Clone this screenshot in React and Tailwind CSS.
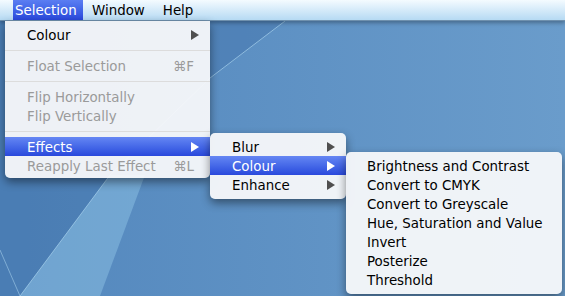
import React from "react";

const font = { fontFamily: '"DejaVu Sans", "Liberation Sans", sans-serif' };

function Arrow({ light }) {
  return (
    <svg width="8" height="10" viewBox="0 0 8 10" className={light ? "fill-white" : "fill-[#4f4f4f]"}>
      <path d="M0 0 L8 5 L0 10 Z" />
    </svg>
  );
}

function Row({ label, arrow, shortcut, disabled, active, pl = "pl-[22px]" }) {
  const color = active ? "text-white" : disabled ? "text-[#9a9a9a]" : "text-black";
  return (
    <div
      className={`h-[19px] flex items-center ${pl} pr-[11px] ${color} ${
        active ? "bg-gradient-to-b from-[#6586f3] to-[#2a48dc]" : ""
      }`}
    >
      <span className="flex-1 whitespace-nowrap leading-[19px] translate-y-[1px]">{label}</span>
      {shortcut && <span className="mr-[5px] leading-[19px] translate-y-[1px]">{shortcut}</span>}
      {arrow && <Arrow light={active} />}
    </div>
  );
}

function Sep() {
  return (
    <div className="h-[12px] flex items-center">
      <div className="h-px w-full bg-[#dcdcdc]" />
    </div>
  );
}

export default function App() {
  return (
    <div
      className="relative w-[565px] h-[296px] overflow-hidden bg-gradient-to-r from-[#5387bd] to-[#6a9ccb] text-[13.4px]"
      style={font}
    >
      {/* desktop light rays */}
      <svg className="absolute inset-0" width="565" height="296" viewBox="0 0 565 296">
        <polygon points="0,21 285,21 210,78 110,175 20,296 0,296" fill="#3a6aa4" opacity="0.35" />
        <polygon points="20,296 110,175 145,175 100,296" fill="#9ad0ee" opacity="0.4" />
        <polyline points="20,296 110,175 210,78 285,21" fill="none" stroke="#b4dcf4" strokeWidth="1" opacity="0.6" />
        <line x1="0" y1="250" x2="20" y2="296" stroke="#b4dcf4" strokeWidth="1" opacity="0.5" />
      </svg>

      {/* menubar */}
      <div className="relative h-[21px] flex items-center pl-[13px] bg-gradient-to-b from-[#f4fbff] to-[#b6daf3] border-b border-[#6f90ad] shadow-[0_2px_4px_rgba(0,0,0,0.3)] text-black leading-[20px]">
        <div className="h-[20px] w-[70px] pl-[2px] flex items-center text-white bg-gradient-to-b from-[#5b7ef2] to-[#2a47dc]">
          <span className="translate-y-[1px]">Selection</span>
        </div>
        <span className="ml-[9px] translate-y-[1px]">Window</span>
        <span className="ml-[18px] translate-y-[1px]">Help</span>
      </div>

      {/* Selection menu */}
      <div className="absolute left-[5px] top-[21px] w-[205px] pt-[4px] pb-[3px] bg-[#f7f8fa]/95 rounded-b-[5px] shadow-[0_4px_10px_rgba(0,0,0,0.45)]">
        <Row label="Colour" arrow />
        <Sep />
        <Row label="Float Selection" shortcut="⌘F" disabled />
        <Sep />
        <Row label="Flip Horizontally" disabled />
        <Row label="Flip Vertically" disabled />
        <Sep />
        <Row label="Effects" arrow active />
        <Row label="Reapply Last Effect" shortcut="⌘L" disabled />
      </div>

      {/* Effects submenu */}
      <div className="absolute left-[210px] top-[133px] w-[136px] pt-[4px] pb-[5px] bg-[#f7f8fa]/95 rounded-[5px] shadow-[0_4px_10px_rgba(0,0,0,0.45)]">
        <Row label="Blur" arrow />
        <Row label="Colour" arrow active />
        <Row label="Enhance" arrow />
      </div>

      {/* Colour submenu */}
      <div className="absolute left-[346px] top-[152px] w-[216px] pt-[4px] pb-[5px] bg-[#f7f8fa]/95 rounded-[5px] shadow-[0_4px_10px_rgba(0,0,0,0.45)]">
        <Row label="Brightness and Contrast" pl="pl-[21px]" />
        <Row label="Convert to CMYK" pl="pl-[21px]" />
        <Row label="Convert to Greyscale" pl="pl-[21px]" />
        <Row label="Hue, Saturation and Value" pl="pl-[21px]" />
        <Row label="Invert" pl="pl-[21px]" />
        <Row label="Posterize" pl="pl-[21px]" />
        <Row label="Threshold" pl="pl-[21px]" />
      </div>
    </div>
  );
}
